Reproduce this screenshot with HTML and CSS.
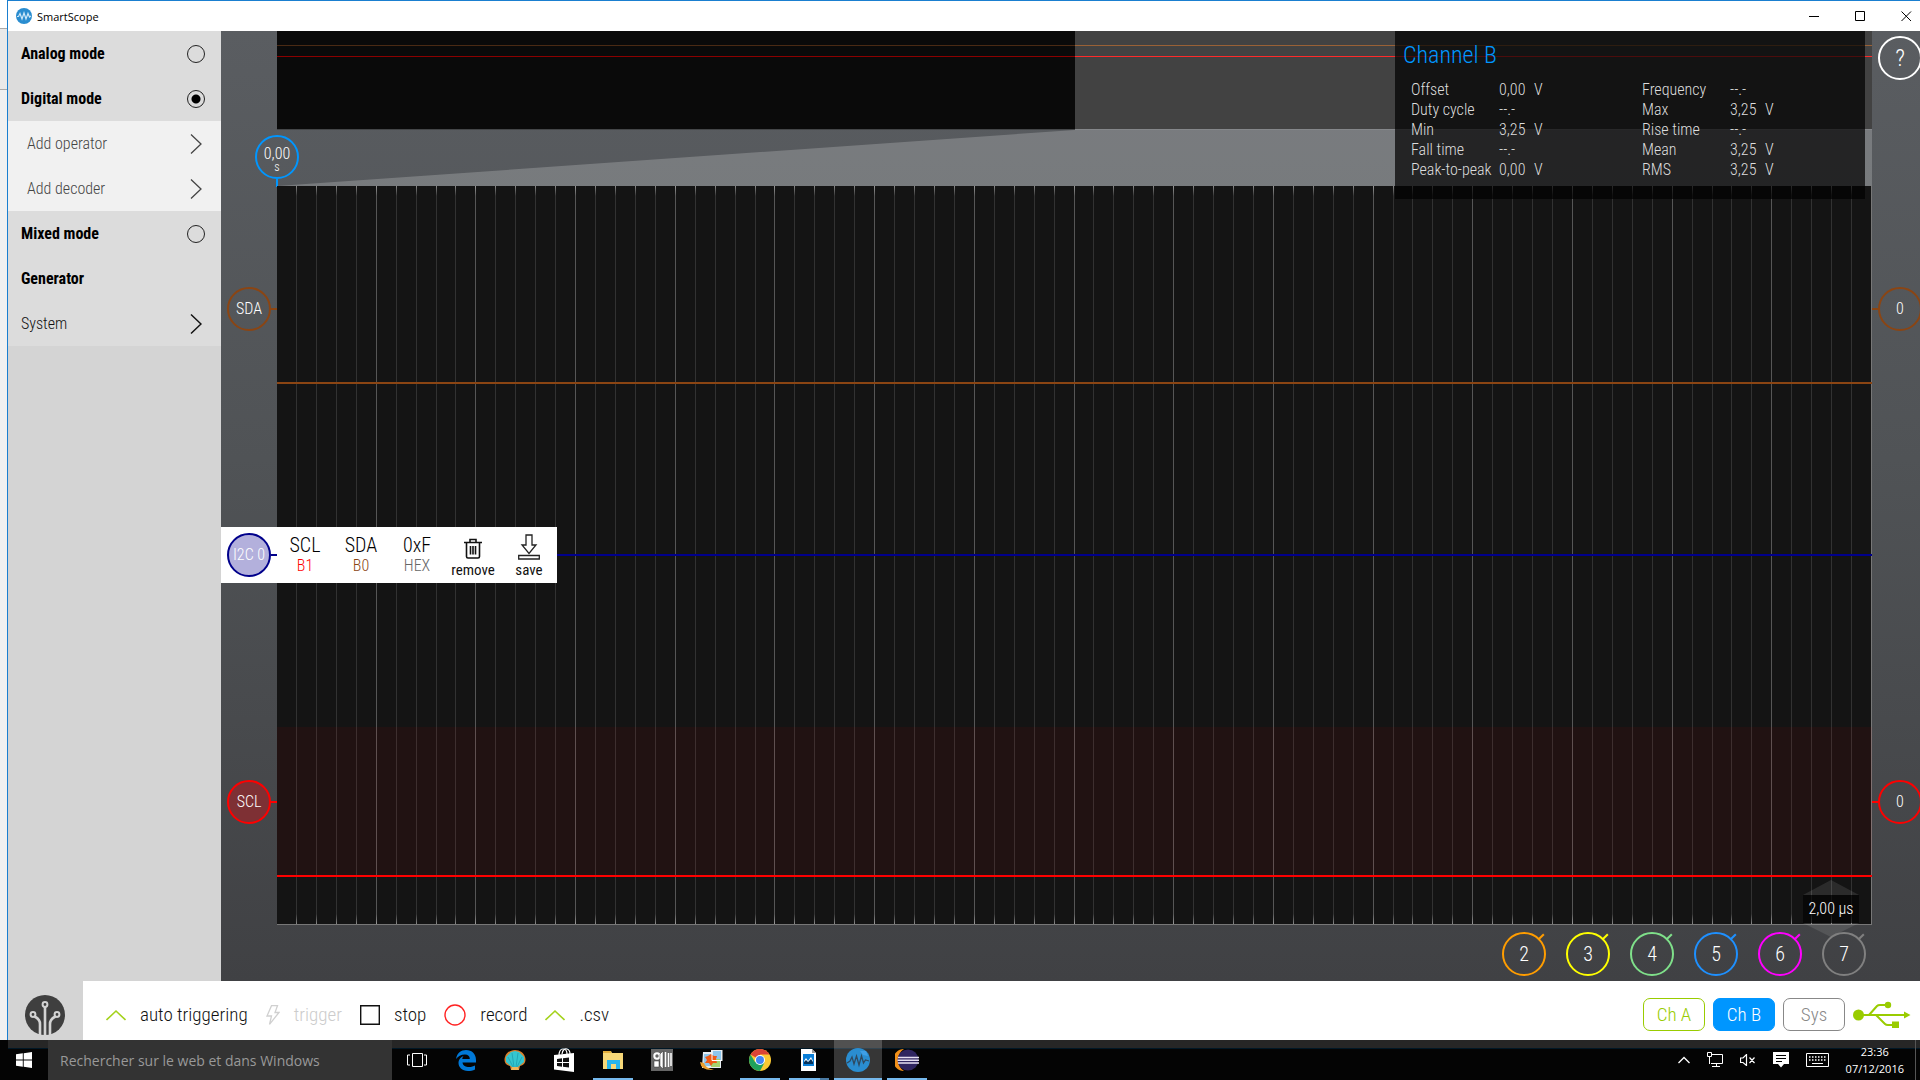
FILE: index.html
```
<!DOCTYPE html>
<html lang="fr">
<head>
<meta charset="utf-8">
<title>SmartScope</title>
<link rel="stylesheet" href="styles.css">
</head>
<body>
<div class="window">
  <header class="titlebar">
    <svg class="app-icon" width="16" height="16" viewBox="0 0 16 16"><circle cx="8" cy="8" r="8" fill="#2a8dd0"/><path d="M1 8.500H2.500L4 5.500 6 11 8 5 10 11 12 5.500 13.500 9 15 8" fill="none" stroke="#cfe8f8" stroke-width="1.200"/></svg>
    <h1>SmartScope</h1>
    <div class="win-controls">
      <button aria-label="Minimize"><svg width="11" height="11"><path d="M0 5.500H10" stroke="#000"/></svg></button>
      <button aria-label="Maximize"><svg width="11" height="11"><path d="M.5.5H9.500V9.500H.5Z" fill="none" stroke="#000"/></svg></button>
      <button aria-label="Close"><svg width="11" height="11"><path d="M.5.5 10 10M10 .5.5 10" stroke="#000"/></svg></button>
    </div>
  </header>

  <div class="workspace">
    <nav class="sidebar">
      <label class="row mode">Analog mode<input type="radio" name="mode"></label>
      <label class="row mode">Digital mode<input type="radio" name="mode" checked></label>
      <button class="row sub">Add operator<svg width="12" height="22"><path d="M1 1.500 11 11 1 20.500" fill="none" stroke="#444" stroke-width="1.300"/></svg></button>
      <button class="row sub">Add decoder<svg width="12" height="22"><path d="M1 1.500 11 11 1 20.500" fill="none" stroke="#444" stroke-width="1.300"/></svg></button>
      <label class="row mode">Mixed mode<input type="radio" name="mode"></label>
      <button class="row mode">Generator</button>
      <button class="row">System<svg width="12" height="22"><path d="M1 1.500 11 11 1 20.500" fill="none" stroke="#111" stroke-width="1.500"/></svg></button>
    </nav>

    <main class="stage">
      <div class="overview"><div class="overview-view"></div><div class="overview-rest"></div></div>
      <div class="zoom-band">
        <svg viewBox="0 0 100 100" preserveAspectRatio="none"><path d="M0 100 50 0H100V100Z" fill="#fff" fill-opacity=".2"/></svg>
        <button class="knob time-knob">0,00<small>s</small></button>
      </div>

      <section class="scope">
        <div class="plot">
          <div class="grid" id="grid"></div>
          <div class="trace sda"></div>
          <div class="trace i2c"></div>
          <div class="fill-high"></div>
          <div class="trace scl"></div>
        </div>
        <button class="knob left sda">SDA</button>
        <button class="knob left scl">SCL</button>
        <button class="knob right sda">0</button>
        <button class="knob right scl">0</button>
        <div class="decoder-menu">
          <button class="knob i2c">I2C 0</button>
          <button class="option">SCL<span class="red">B1</span></button>
          <button class="option">SDA<span class="brown">B0</span></button>
          <button class="option">0xF<span class="gray">HEX</span></button>
          <button class="option action"><svg width="20" height="22" viewBox="0 0 20 22"><path d="M1 4.500H19M7 4V1.500H13V4M3.500 5V18.500Q3.500 20 5 20H15Q16.500 20 16.500 18.500V5M7.500 8V16.500M10 8V16.500M12.500 8V16.500" fill="none" stroke="#111" stroke-width="1.600"/></svg><span>remove</span></button>
          <button class="option action"><svg width="22" height="26" viewBox="0 0 22 26"><path d="M8 1H14V11H18L11 19.500 4 11H8ZM.7 21.500H21.300V25H.7Z" fill="none" stroke="#222" stroke-width="1.300"/></svg><span>save</span></button>
        </div>
        <div class="timebase">
          <svg width="56" height="15"><path d="M0 15 28 0 56 15Z" fill="#fff" fill-opacity=".1"/></svg>
          <span>2,00 µs</span>
          <svg width="56" height="14"><path d="M0 0 28 14 56 0Z" fill="#fff" fill-opacity=".1"/></svg>
        </div>
      </section>

      <div class="channels">
        <button class="dial c2">2</button>
        <button class="dial c3">3</button>
        <button class="dial c4">4</button>
        <button class="dial c5">5</button>
        <button class="dial c6">6</button>
        <button class="dial c7">7</button>
      </div>

      <aside class="measure">
        <h2>Channel B</h2>
        <table>
          <tr><th>Offset</th><td>0,00</td><td>V</td><th>Frequency</th><td>--.-</td><td></td></tr>
          <tr><th>Duty cycle</th><td>--.-</td><td></td><th>Max</th><td>3,25</td><td>V</td></tr>
          <tr><th>Min</th><td>3,25</td><td>V</td><th>Rise time</th><td>--.-</td><td></td></tr>
          <tr><th>Fall time</th><td>--.-</td><td></td><th>Mean</th><td>3,25</td><td>V</td></tr>
          <tr><th>Peak-to-peak</th><td>0,00</td><td>V</td><th>RMS</th><td>3,25</td><td>V</td></tr>
        </table>
      </aside>
      <button class="knob help">?</button>
    </main>
  </div>

  <footer class="dock">
    <div class="brand">
      <svg width="40" height="40" viewBox="0 0 40 40"><circle cx="20" cy="20" r="20" fill="#3f3f3f"/><g fill="none" stroke="#d4d4d4" stroke-width="2"><circle cx="20" cy="9.500" r="2.400"/><circle cx="8" cy="19.500" r="2.400"/><circle cx="32" cy="19.500" r="2.400"/><path stroke-width="2.600" d="M20 12V40M9.500 21.500Q15 24 15 29V40M30.500 21.500Q25 24 25 29V40"/></g></svg>
    </div>
    <div class="toolbar">
      <button class="tool"><svg width="20" height="20"><path d="M.5 15 10 6 19.500 15" fill="none" stroke="#a4d21c" stroke-width="1.600"/></svg>auto triggering</button>
      <button class="tool idle"><svg width="14" height="20" viewBox="0 0 14 20"><path d="M5.500.7H11.500L9 7.500H13L3.500 19.300 5.500 11H1Z" fill="none" stroke="#d0d0d0" stroke-width="1.300"/></svg>trigger</button>
      <button class="tool"><svg width="20" height="20"><path d="M.7.7H19.300V19.300H.7Z" fill="none" stroke="#111" stroke-width="1.400"/></svg>stop</button>
      <button class="tool"><svg width="22" height="22"><circle cx="11" cy="11" r="10" fill="none" stroke="#f22" stroke-width="1.400"/></svg>record</button>
      <button class="tool"><svg width="20" height="20"><path d="M.5 15 10 6 19.500 15" fill="none" stroke="#a4d21c" stroke-width="1.600"/></svg>.csv</button>
      <div class="status">
        <button class="pill cha">Ch A</button>
        <button class="pill chb">Ch B</button>
        <button class="pill sys">Sys</button>
        <svg width="58" height="28" viewBox="0 0 58 28"><g fill="#99cc00"><circle cx="5.500" cy="14" r="5.500"/><circle cx="35" cy="4" r="3.200"/><path d="M51 10.500 57.500 14 51 17.500ZM39 20.500H46V27H39Z"/></g><path d="M5 14H52M16 14 24 5Q25 4 27 4H35M23 14 32 23Q33 24 35 24H41" fill="none" stroke="#99cc00" stroke-width="2"/></svg>
      </div>
    </div>
  </footer>
</div>

<div class="taskbar">
  <button class="start" aria-label="Start"><svg width="16" height="16" viewBox="0 0 16 16"><path d="M0 2.300 6.800 1.300V7.500H0ZM7.700 1.200 16 0V7.500H7.700ZM0 8.500H6.800V14.700L0 13.700ZM7.700 8.500H16V16L7.700 14.800Z" fill="#fff"/></svg></button>
  <input class="search" type="text" aria-label="Search" placeholder="Rechercher sur le web et dans Windows">
  <div class="apps">
    <button aria-label="Task view"><svg width="22" height="22" viewBox="0 0 22 22"><path d="M6.500 4.500H16.500V17.500H6.500ZM4 6H1.500V16H4M18 6H20.500V16H18" fill="none" stroke="#fff"/></svg></button>
    <button aria-label="Edge"><svg width="22" height="22" viewBox="0 0 22 22"><path d="M1 10C2 4 6 1 11 1 17 1 21 5 21 11V13.500H7.500C8 17 11 18 14 18 16.500 18 18.500 17.300 20 16.500V20.500C18 21.500 15.500 22 13 22 7 22 3.500 18 3.500 14 3.500 10.500 6 8 8.500 7 7.500 8.300 7.300 9.500 7.300 10H14.800C14.800 7 13 5.500 10 5.500 6 5.500 3 7.500 1 10Z" fill="#0078d7"/></svg></button>
    <button aria-label="Classic Shell"><svg width="22" height="22" viewBox="0 0 22 22"><path d="M6 17C0 16 0 10 1 8 2 4 6 1 11 1S20 4 21 8C22 10 22 16 16 17L15 21H7Z" fill="#d9812e"/><path d="M8 18 2 13V8L7 3 11 2 15 3 20 8V13L14 18Z" fill="#35c6cf"/><path d="M9 18 4 8M10 18 8 4M12 18 14 4M13 18 18 8" stroke="#1c9aac" stroke-width=".7"/><path d="M8 18H14L15 21H7Z" fill="#f0b45b"/></svg></button>
    <button aria-label="Store"><svg width="22" height="24" viewBox="0 0 22 24"><path d="M1 7 21 5V24L1 21.500Z" fill="#fff"/><path d="M6 8Q6 1 10 1T14 6M9 6Q10 0 14 1 17 2 17 6" fill="none" stroke="#fff" stroke-width="1.200"/><path d="M4 11 9 10.300V14H4ZM10 10.200 16 9.500V14H10ZM4 15H9V18.700L4 18ZM10 15H16V19.500L10 18.800Z" fill="#111"/></svg></button>
    <button class="open" aria-label="Explorer"><svg width="22" height="22" viewBox="0 0 22 22"><path d="M1 2H9L10 4H21V20H1Z" fill="#f7d878"/><path d="M1 2H9V4H1Z" fill="#e3ae3c"/><path d="M5 11H18V20H14V15H9V20H5Z" fill="#28b5ec"/></svg></button>
    <button aria-label="Library"><svg width="22" height="22" viewBox="0 0 22 22"><path d="M0 0H22V22H0Z" fill="#666"/><circle cx="6" cy="7" r="2.700" fill="none" stroke="#fff" stroke-width="2"/><path d="M3 12H8V18H3ZM9 5 12 2V20L9 17Z" fill="#fff" stroke="#333" stroke-width=".5"/><path d="M14.500 3V18M17.500 4V18M20 4V17" stroke="#fff" stroke-width="1.500"/></svg></button>
    <button aria-label="Gallery"><svg width="23" height="22" viewBox="0 0 23 22"><path d="M3 3H12V19H2ZM11 1H22.500V12H21V19H11Z" fill="#e8eef2"/><path d="M4 5H11V17H3.500ZM12.500 2H21V11H12.500Z" fill="#8dc6ed"/><path d="M11 10H20V18H11Z" fill="#a6d26d"/><path d="M5 8 8 7 11 5 14 7 17 7 16 10 17 14 13 14 11 17 9 14 5 14 7 11Z" fill="#ef5a16"/><path d="M12 2V11.500H22" fill="none" stroke="#fff"/><path d="M0 13Q1 22 14 21 5 19 4 14Z" fill="#eda02e"/></svg></button>
    <button class="open" aria-label="Chrome"><svg width="22" height="22" viewBox="0 0 22 22"><circle cx="11" cy="11" r="11" fill="#fbc932"/><path d="M11 11 1.500 5.500A11 11 0 0 1 20.500 5.500H11Z" fill="#db4437"/><path d="M1.500 5.500A11 11 0 0 0 11 22L15.500 13.500 11 11 6 13Z" fill="#1fa15d"/><circle cx="11" cy="11" r="5" fill="#fff"/><circle cx="11" cy="11" r="4" fill="#4285f4"/></svg></button>
    <button class="open many" aria-label="Documents"><svg width="22" height="22" viewBox="0 0 22 22"><path d="M3 0H14L18 4V22H3Z" fill="#fff"/><path d="M14 0V4H18Z" fill="#999"/><path d="M5 5H16V17H5Z" fill="#0b7fd8"/><path d="M6 15V12L8 9 10 12 13 8 15 12V15Z" fill="#fff"/><path d="M6 15V13L8 11 10 13 13 10 15 13V15Z" fill="#08335a"/></svg></button>
    <button class="open active" aria-label="SmartScope"><svg width="24" height="24" viewBox="0 0 24 24"><circle cx="12" cy="12" r="12" fill="#2a8dd0"/><path d="M14 3 20 3 22 8 17 7Z" fill="#3f9fe6"/><path d="M1 15 4 13 6 9 8 16 10.500 8 13 17 15.500 8 17.500 15 19.500 12 23 13" fill="none" stroke="#2f4a60" stroke-width="1.300"/></svg></button>
    <button class="open" aria-label="Eclipse"><svg width="24" height="22" viewBox="0 0 24 22"><path d="M9 0A11 11 0 0 0 9 22 13 13 0 0 1 9 0Z" fill="#f29019"/><circle cx="13" cy="11" r="10.500" fill="#2f2560"/><path d="M3 8.500H24M2.500 11.200H24M3 14H24" stroke="#e6e0f2" stroke-width="1.500"/></svg></button>
  </div>
  <div class="tray">
    <svg width="12" height="8"><path d="M.5 7 6 1.500 11.500 7" fill="none" stroke="#fff" stroke-width="1.300"/></svg>
    <svg width="16" height="16"><path d="M4 2.500H15.500V11.500H4M.5.5H4.500V4.500H.5ZM2.500 5V12M9.500 12V14.500M5 14.500H13" fill="none" stroke="#fff"/></svg>
    <svg width="16" height="12"><path d="M.5 4V8.500H3L6.500 11.500V.5L3 4ZM9.500 3.500 14.500 9M14.500 3.500 9.500 9" fill="none" stroke="#fff" stroke-width="1.200"/></svg>
    <svg width="16" height="16"><path d="M0 0H16V12H11L8 15.500 5 12H0Z" fill="#fff"/><path d="M3 3.500H13M3 6.500H13M3 9.500H9" stroke="#000"/></svg>
    <svg width="23" height="14"><path d="M.5.5H22.500V13.500H.5Z" fill="none" stroke="#fff"/><path d="M3 4H20M3 7H20" stroke="#fff" stroke-width="1.500" stroke-dasharray="1.500 1.500"/><path d="M6 10.500H17" stroke="#fff"/></svg>
    <time>23:36<br>07/12/2016</time>
  </div>
</div>
<script src="grid.js"></script>
</body>
</html>
```
FILE: grid.js
```
// 16 time divisions, each split in 5
const grid = document.getElementById('grid');
for (let i = 0; i < 80; i++) {
  grid.appendChild(document.createElement('i'));
}
```
FILE: styles.css
```
* { box-sizing: border-box; }
body {
  margin: 0;
  min-height: 100vh;
  display: flex;
  flex-direction: column;
  font-family: "Roboto Condensed", "Liberation Sans Narrow", "Liberation Sans", sans-serif;
  font-size: 16px;
  font-weight: 300;
  color: #111;
  background: linear-gradient(#fff 28px, #aaa 28px 29px, #e9e9e9 29px 89px, #aaa 89px 90px, #f1f1f1 90px);
  overflow-x: hidden;
}
button, input { font: inherit; color: inherit; }
button { border: 0; padding: 0; background: none; white-space: nowrap; }
svg { display: block; flex: none; }

.window {
  flex: 1;
  display: flex;
  flex-direction: column;
  margin-left: 7px;
  border-left: 1px solid #1a7fd0;
  border-top: 1px solid #1a7fd0;
}
.titlebar { display: flex; align-items: center; height: 30px; padding: 0 8px; background: #fff; gap: 5px; }
.titlebar h1 { margin: 0; font: 400 11px "Open Sans", sans-serif; color: #000; }
.win-controls { display: flex; gap: 35px; margin-left: auto; }

.workspace { flex: 1; display: flex; }
.sidebar { width: 213px; background: #d4d4d4; display: flex; flex-direction: column; }
.row {
  display: flex; align-items: center; justify-content: space-between;
  width: 100%; height: 45px; padding: 0 19px 0 13px; background: #dcdcdc; text-align: left;
}
.row.mode { font-weight: 700; padding-right: 16px; color: #000; }
.row.sub { background: #f1f1f1; padding-left: 19px; color: #444; }
.row input {
  appearance: none; width: 18px; height: 18px; margin: 0;
  border: 1px solid #222; border-radius: 50%;
}
.row input:checked { background: radial-gradient(circle, #000 4px, transparent 5px); }

.stage {
  position: relative; flex: 1; min-width: 0; overflow: hidden;
  display: flex; flex-direction: column;
  background: linear-gradient(#5a5d61, #505356 45%, #404144);
}
.overview, .zoom-band, .scope { margin: 0 48px 0 56px; }
.overview { display: flex; height: 99px; }
.overview div { flex: 1; border-bottom: 1px solid #444648; }
.overview-view { background: linear-gradient(transparent 14px, #4a2a14 14px 15px, transparent 15px 25px, #8b0000 25px 26px, transparent 26px) #0a0a0a; }
.overview .overview-rest {
  border-bottom-color: #85878a;
  background: linear-gradient(transparent 14px, #9a6136 14px 15px, transparent 15px 25px, #ff2a2a 25px 26px, transparent 26px) #424242;
}
.zoom-band { position: relative; height: 56px; }
.zoom-band svg { width: 100%; height: 100%; }

.knob {
  width: 44px; height: 44px; border: 2px solid; border-radius: 50%;
  color: #fff; text-align: center; line-height: 20px;
}
.knob::after { content: ""; position: absolute; background: currentColor; }
.time-knob { position: absolute; left: -22px; top: 5px; border-color: #0096ff; line-height: 14px; padding-top: 5px; }
.time-knob small { display: block; font-size: 12px; line-height: 12px; }
.time-knob::after { left: 19px; top: 42px; width: 2px; height: 8px; background: #0096ff; }

.scope { position: relative; flex: 1; min-height: 400px; display: flex; }
.plot { position: relative; flex: 1; background: #141414; border-bottom: 1px solid #777; }
.grid { position: absolute; inset: 0; display: grid; grid-template-columns: repeat(80, 1fr); }
.grid i { display: flex; justify-content: flex-end; }
.grid i::after { content: ""; width: 1px; background: linear-gradient(#888, #323232 10px calc(100% - 10px), #888); }
.grid i:nth-child(5n)::after { background: linear-gradient(#999, #565656 10px calc(100% - 10px), #999); }
.grid i:last-child::after { background: #777; }
.trace { position: absolute; left: 0; right: 0; height: 2px; }
.trace.sda { top: 26.500%; background: #8b4513; }
.trace.i2c { top: 49.800%; background: #00008b; }
.trace.scl { top: 93.300%; background: #f00; }
.fill-high { position: absolute; left: 0; right: 0; top: 73.300%; height: 20%; background: rgba(255, 0, 0, .06); }

.knob.left, .knob.right { position: absolute; transform: translateY(-50%); }
.knob.left { left: -50px; }
.knob.right { right: -50px; }
.scope > .sda { top: 16.600%; border-color: #8b4513; }
.scope > .scl { top: 83.300%; border-color: #f00; }
.scope > .left.scl { background: #7e3034; }
.knob.left::after, .knob.i2c::after { left: 42px; top: 19px; width: 6px; height: 2px; }
.knob.right::after { right: 42px; top: 19px; width: 6px; height: 2px; }
.scope > .sda::after { background: #8b4513; }
.scope > .scl::after { background: #f00; }

.decoder-menu {
  position: absolute; left: -56px; top: 49.900%; transform: translateY(-50%);
  display: flex; height: 56px; padding-left: 6px; background: #fff; align-items: center;
}
.knob.i2c { position: relative; border-color: #00008b; background: #b3b0dc; margin-right: 6px; }
.knob.i2c::after { background: #00008b; }
.option {
  width: 56px; height: 56px; display: flex; flex-direction: column; align-items: center; justify-content: center;
  font-size: 20px; line-height: 22px; color: #000;
}
.option span { font-size: 16px; line-height: 20px; }
.option.action { justify-content: flex-end; padding-bottom: 3px; }
.red { color: #f00; }
.brown { color: #8b4513; }
.gray { color: #666; }
.option.action span { color: #111; font-weight: 400; font-size: 15px; }

.timebase { position: absolute; right: 13px; bottom: -12px; width: 56px; }
.timebase span { display: block; height: 28px; line-height: 28px; text-align: center; color: #fff; background: rgba(0, 0, 0, .6); }

.channels { display: flex; justify-content: flex-end; gap: 20px; height: 56px; padding: 7px 54px 0 0; }
.dial { position: relative; width: 44px; height: 44px; border: 2px solid; border-radius: 50%; font-size: 20px; }
.dial::first-letter { color: #fff; }
.dial::after { content: ""; position: absolute; right: -1px; top: 2px; width: 8px; height: 2px; background: currentColor; transform: rotate(-45deg); }
.c2 { color: #ff9d00; }
.c3 { color: #ff0; }
.c4 { color: #7fe08a; }
.c5 { color: #1e90ff; }
.c6 { color: #f0f; }
.c7 { color: #808080; }

.measure { position: absolute; top: 0; right: 55px; width: 470px; height: 168px; padding: 10px 16px; background: rgba(0, 0, 0, .7); color: #ddd; }
.measure h2 { margin: 0 0 10px -8px; font-size: 24px; font-weight: 300; line-height: 29px; color: #0096ff; }
.measure table { border-collapse: collapse; table-layout: fixed; width: 462px; line-height: 20px; }
.measure th, .measure td { padding: 0; font-weight: 300; text-align: left; white-space: nowrap; }
.measure th { width: 88px; }
.measure td { width: 35px; }
.measure td:nth-child(3) { width: 108px; }
.measure td:nth-child(6) { width: 108px; }
.help { position: absolute; top: 5px; right: -2px; font-size: 24px; }

.dock { display: flex; height: 59px; background: #d4d4d4; }
.brand { width: 75px; padding: 14px 0 0 17px; overflow: hidden; }
.toolbar { flex: 1; display: flex; align-items: center; gap: 18px; padding: 8px 9px 0 23px; background: #fff; font-size: 19px; }
.tool { display: flex; align-items: center; gap: 14px; }
.idle { color: #ccc; }
.status { display: flex; align-items: center; gap: 8px; margin-left: auto; }
.pill { width: 62px; height: 33px; border: 1px solid; border-radius: 7px; }
.cha { color: #99cc00; }
.chb { color: #fff; background: #0096ff; border-color: #0096ff; }
.sys { color: #888; }

.taskbar {
  display: flex; height: 40px; color: #fff; font-family: "Open Sans", sans-serif; font-weight: 400;
  background: linear-gradient(#262626 8px, #001726 8px 9px, transparent 9px) 8px 0 no-repeat #040404;
}
.start { width: 48px; padding-left: 16px; }
.search { width: 344px; height: 40px; border: 0; padding: 0 12px; background: #333; font-size: 14px; }
.search::placeholder { color: #999; opacity: 1; }
.apps { display: flex; gap: 1px; margin-left: 1px; }
.apps button { width: 48px; height: 40px; display: flex; align-items: center; justify-content: center; }
.open { background: linear-gradient(#76b9ed, #76b9ed) center bottom / 40px 2px no-repeat; }
.open.many { background-image: linear-gradient(to right, #76b9ed 31px, #4a7aa3 31px); }
.open.active { background-size: 100% 2px; background-color: rgba(255, 255, 255, .2); }
.tray { display: flex; align-items: center; gap: 17px; margin-left: auto; margin-right: 4px; padding-right: 11px; border-right: 1px solid #555; }
.tray time { font-size: 11px; line-height: 17px; text-align: center; }
```
